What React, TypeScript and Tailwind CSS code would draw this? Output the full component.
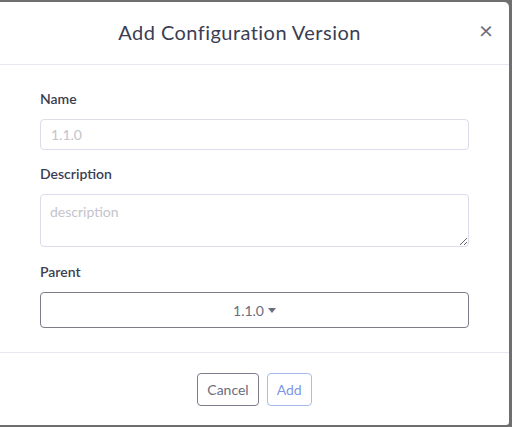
import React from 'react';

const App = () => {
  return (
    <div className="w-[512px] h-[427px] bg-[#6f6f6f] pt-[2px] overflow-hidden" style={{fontFamily: 'Lato, "Open Sans", sans-serif'}}>
      <div className="w-[509px] h-[423px] bg-white rounded-tr-[5px] rounded-br-[3px] flex flex-col">
        <div className="h-[63px] flex items-center pl-[16px] pr-[16px] border-b border-[#e6e7f0]">
          <h2 className="flex-1 text-center text-[20px] text-[#3b3d52] tracking-[0.45px] pb-[3px] pr-[16px]">Add Configuration Version</h2>
          <button className="text-[#6b6d7c] text-[24px] leading-none pb-[6px]">×</button>
        </div>
        <div className="px-[40px] pt-[23px] h-[288px] border-b border-[#e6e7f0]">
          <label className="block text-[14px] font-semibold text-[#3b3d52] mb-[10px]">Name</label>
          <input
            type="text"
            placeholder="1.1.0"
            className="block w-[429px] h-[31px] border border-[#dcdcea] rounded-[4px] px-[10px] text-[14px] placeholder-[#c4c4cc] outline-none"
          />
          <label className="block text-[14px] font-semibold text-[#3b3d52] mt-[13px] mb-[10px]">Description</label>
          <textarea
            placeholder="description"
            className="block w-[429px] h-[53px] border border-[#dcdcea] rounded-[4px] px-[9px] py-[6px] text-[14px] placeholder-[#c4c4cc] outline-none"
          />
          <label className="block text-[14px] font-semibold text-[#3b3d52] mt-[14px] mb-[10px]">Parent</label>
          <button className="flex w-[429px] h-[36px] border border-[#7c7c8a] rounded-[4px] items-center justify-center gap-[4px] text-[14px] text-[#6b6d7c]">
            1.1.0
            <svg width="8" height="5" viewBox="0 0 8 5"><path d="M0 0h8L4 5z" fill="#6b6d7c"/></svg>
          </button>
        </div>
        <div className="flex justify-center gap-[8px] pt-[20px]">
          <button className="h-[33px] px-[9px] border border-[#7c7c8a] rounded-[4px] text-[14px] text-[#6b6d7c]">Cancel</button>
          <button className="h-[33px] px-[9px] border border-[#a8bcf3] rounded-[4px] text-[14px] text-[#7c97e6]">Add</button>
        </div>
      </div>
    </div>
  );
};

export default App;
